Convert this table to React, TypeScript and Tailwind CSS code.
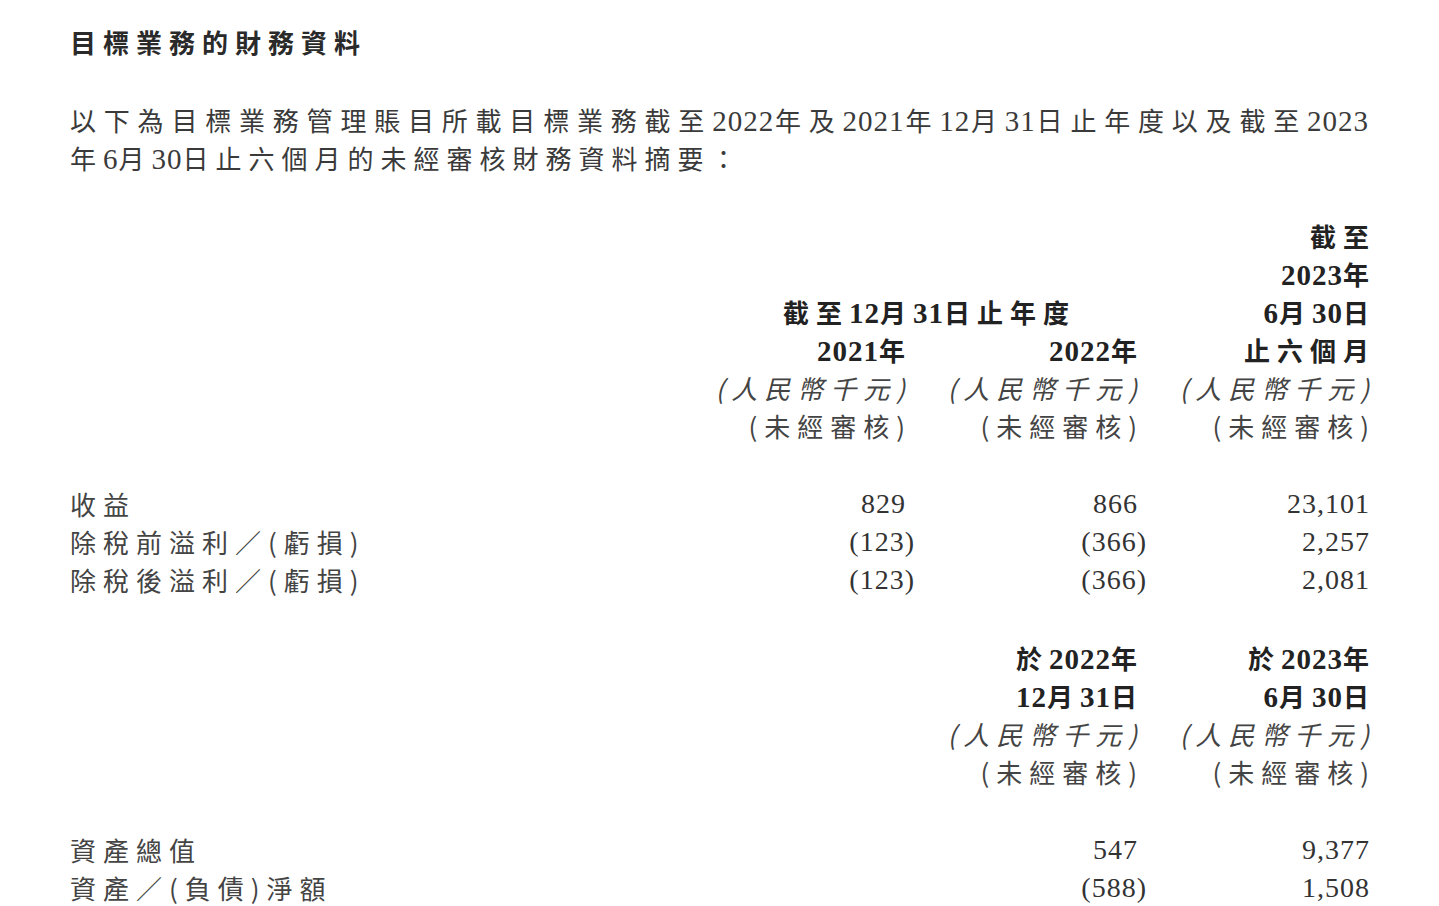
import React from "react";

const CJK = "font-['Noto_Sans_CJK_TC','Noto_Sans_CJK_SC',sans-serif] text-[26px] tracking-[7px]";
const TNUM = "font-['Liberation_Serif','Times_New_Roman',serif] text-[29px] tracking-[1px]";
const NUM = "font-['Liberation_Serif','Times_New_Roman',serif] text-[28px] tracking-[1px]";

function M({ t }: { t: string }) {
  const parts = t.split(/([0-9,]+)/);
  return (
    <>
      {parts.map((p, i) =>
        p === "" ? null : /^[0-9,]+$/.test(p) ? (
          <span key={i} className={TNUM}>
            {p}
          </span>
        ) : (
          <span key={i} className={CJK}>
            {p}
          </span>
        )
      )}
    </>
  );
}

function Head({ t, italic }: { t: string; italic?: boolean }) {
  return (
    <div className={`h-[38px] leading-[38px] whitespace-nowrap text-right text-[#444] ${italic ? "italic" : ""}`}>
      <span className="mr-[-7px]">
        <M t={t} />
      </span>
    </div>
  );
}

function BoldHead({ t, span2, pad }: { t: string; span2?: boolean; pad?: boolean }) {
  return (
    <div
      className={`h-[38px] leading-[38px] whitespace-nowrap text-right font-bold text-[#222] ${span2 ? "col-span-2" : ""} ${
        pad ? "pr-[68px]" : ""
      }`}
    >
      <span className="mr-[-7px]">
        <M t={t} />
      </span>
    </div>
  );
}

function Num({ v }: { v: string }) {
  const neg = v.startsWith("(");
  return (
    <div className="h-[38px] leading-[38px] whitespace-nowrap text-right text-[#333]">
      <span className={`${NUM} ${neg ? "mr-[-10px]" : "mr-[-1px]"}`}>{v}</span>
    </div>
  );
}

function Label({ t }: { t: string }) {
  return (
    <div className="h-[38px] leading-[38px] whitespace-nowrap text-[#444]">
      <M t={t} />
    </div>
  );
}

const Empty = () => <div className="h-[38px]" />;

export default function App() {
  return (
    <div className="h-[906px] w-full overflow-hidden bg-white text-[#333]">
      <div className="pl-[70px] pt-[23px] w-[1369px]">
        {/* Title */}
        <div className="h-[38px] leading-[38px] whitespace-nowrap font-bold text-[#2a2a2a]">
          <M t="目標業務的財務資料" />
        </div>

        {/* Paragraph */}
        <div className="mt-[40px] text-[#3a3a3a]">
          <div className="h-[38px] leading-[38px] whitespace-nowrap text-justify [text-align-last:justify]">
            <M t="以下為目標業務管理賬目所載目標業務截至2022年及2021年12月31日止年度以及截至2023" />
          </div>
          <div className="h-[38px] leading-[38px] whitespace-nowrap">
            <M t="年6月30日止六個月的未經審核財務資料摘要：" />
          </div>
        </div>

        {/* Table 1 header */}
        <div className="mt-[40px] grid grid-cols-[1fr_232px_232px_232px]">
          <Empty />
          <Empty />
          <Empty />
          <BoldHead t="截至" />

          <Empty />
          <Empty />
          <Empty />
          <BoldHead t="2023年" />

          <Empty />
          <BoldHead t="截至12月31日止年度" span2 pad />
          <BoldHead t="6月30日" />

          <Empty />
          <BoldHead t="2021年" />
          <BoldHead t="2022年" />
          <BoldHead t="止六個月" />

          <Empty />
          <Head t="(人民幣千元)" italic />
          <Head t="(人民幣千元)" italic />
          <Head t="(人民幣千元)" italic />

          <Empty />
          <Head t="(未經審核)" />
          <Head t="(未經審核)" />
          <Head t="(未經審核)" />
        </div>

        {/* Table 1 data */}
        <div className="mt-[40px] grid grid-cols-[1fr_232px_232px_232px]">
          <Label t="收益" />
          <Num v="829" />
          <Num v="866" />
          <Num v="23,101" />

          <Label t="除稅前溢利／(虧損)" />
          <Num v="(123)" />
          <Num v="(366)" />
          <Num v="2,257" />

          <Label t="除稅後溢利／(虧損)" />
          <Num v="(123)" />
          <Num v="(366)" />
          <Num v="2,081" />
        </div>

        {/* Table 2 header */}
        <div className="mt-[40px] grid grid-cols-[1fr_232px_232px_232px]">
          <Empty />
          <Empty />
          <BoldHead t="於2022年" />
          <BoldHead t="於2023年" />

          <Empty />
          <Empty />
          <BoldHead t="12月31日" />
          <BoldHead t="6月30日" />

          <Empty />
          <Empty />
          <Head t="(人民幣千元)" italic />
          <Head t="(人民幣千元)" italic />

          <Empty />
          <Empty />
          <Head t="(未經審核)" />
          <Head t="(未經審核)" />
        </div>

        {/* Table 2 data */}
        <div className="mt-[40px] grid grid-cols-[1fr_232px_232px_232px]">
          <Label t="資產總值" />
          <Empty />
          <Num v="547" />
          <Num v="9,377" />

          <Label t="資產／(負債)淨額" />
          <Empty />
          <Num v="(588)" />
          <Num v="1,508" />
        </div>
      </div>
    </div>
  );
}
